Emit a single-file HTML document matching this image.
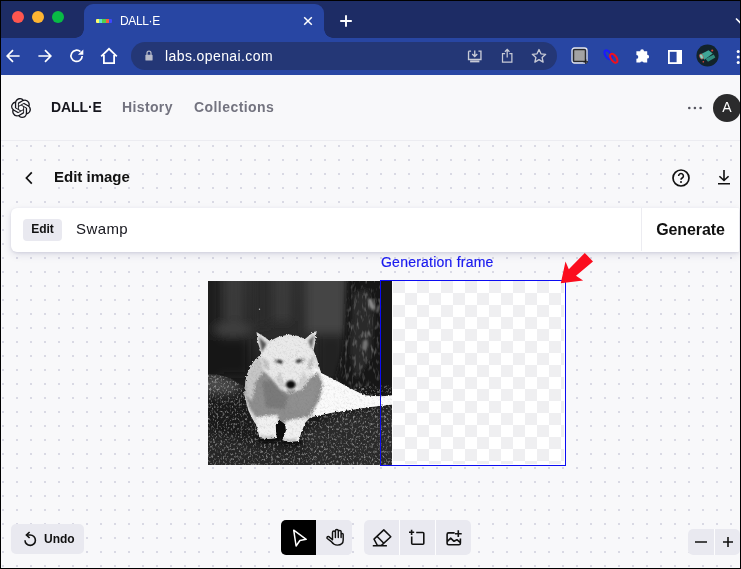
<!DOCTYPE html>
<html lang="en">
<head>
<meta charset="utf-8">
<title>DALL·E</title>
<style>
*{box-sizing:border-box;margin:0;padding:0}
html,body{width:741px;height:569px;overflow:hidden;background:#000}
body{font-family:"Liberation Sans",Arial,sans-serif;position:relative;color:#111}
#win{position:absolute;left:1px;top:1px;width:739px;height:567px;overflow:hidden;background:#f8f8fa}
.abs{position:absolute}
.nav,#tabtitle,#url,.t{will-change:transform}
/* chrome */
#tabbar{position:absolute;left:0;top:0;width:100%;height:37px;background:#1d2c65}
#tab{position:absolute;left:83px;top:3px;width:240px;height:34px;background:#2846a3;border-radius:9px 9px 0 0}
#tab:before,#tab:after{content:"";position:absolute;bottom:0;width:9px;height:9px}
#tab:before{left:-9px;background:radial-gradient(circle at 0 0,rgba(0,0,0,0) 8.5px,#2846a3 9px)}
#tab:after{right:-9px;background:radial-gradient(circle at 100% 0,rgba(0,0,0,0) 8.5px,#2846a3 9px)}
#toolbar{position:absolute;left:0;top:37px;width:100%;height:37px;background:#2846a3}
#pill{position:absolute;left:130px;top:4px;width:426px;height:28px;border-radius:14px;background:#243776}
.tl{position:absolute;top:10px;width:12px;height:12px;border-radius:50%}
#tabtitle{position:absolute;left:36px;top:10px;font-size:12px;color:#fff;letter-spacing:-.35px}
#url{position:absolute;left:34px;top:6px;font-size:14px;color:#fff;letter-spacing:.4px}
/* page */
#page{position:absolute;left:0;top:74px;width:100%;height:493px;background-color:#f8f8fa}
#hdr{position:absolute;left:0;top:0;width:100%;height:66px;border-bottom:1px solid #ececf1;background:#f8f8fa}
#canvas{position:absolute;left:0;top:66px;width:100%;height:427px;background-color:#f8f8fa;
 background-image:radial-gradient(circle,#d9d9e4 0.8px,rgba(217,217,228,0) 1.3px);background-size:14px 14px;background-position:-5px -2px}
.nav{position:absolute;top:24px;font-size:14px;font-weight:bold;line-height:16px;white-space:nowrap}
.ibtn{position:absolute;background:#f8f8fa}
.tool{position:absolute;top:0;width:35px;height:35px;background:#e9e9f0}
</style>
</head>
<body>
<div id="win">
 <div id="tabbar">
  <div class="tl" style="left:11px;background:#ff564f"></div>
  <div class="tl" style="left:31px;background:#ffb532"></div>
  <div class="tl" style="left:51px;background:#08bb45"></div>
  <div id="tab">
   <div class="abs" style="left:12px;top:15px;width:16px;height:4px;border-radius:1px;background:linear-gradient(90deg,#fdfd6a 0 20%,#5fe0d0 20% 40%,#52d14c 40% 60%,#f5603c 60% 80%,#3c46ff 80% 100%)"></div>
   <div id="tabtitle">DALL·E</div>
   <svg class="abs" style="left:218px;top:11px" width="12" height="12" viewBox="0 0 12 12"><path d="M2.2 2.2l7.6 7.6M9.8 2.2l-7.6 7.6" stroke="#fff" stroke-width="1.5" fill="none"/></svg>
  </div>
  <svg class="abs" style="left:338px;top:13px" width="14" height="14" viewBox="0 0 14 14"><path d="M7 1.2v11.6M1.2 7h11.6" stroke="#fff" stroke-width="1.9" fill="none"/></svg>
  <svg class="abs" style="left:733.500px;top:15.500px" width="10" height="8" viewBox="0 0 10 8"><path d="M1 1.5l4 4 4-4" stroke="#fff" stroke-width="1.6" fill="none"/></svg>
 </div>
 <div id="toolbar">
  <svg class="abs" style="left:4px;top:10px" width="16" height="16" viewBox="0 0 16 16"><path d="M14.6 8H2.6M8 2.2L2.2 8 8 13.8" stroke="#fff" stroke-width="1.7" fill="none"/></svg>
  <svg class="abs" style="left:36px;top:10px" width="16" height="16" viewBox="0 0 16 16"><path d="M1.4 8h12M8 2.2L13.8 8 8 13.8" stroke="#fff" stroke-width="1.7" fill="none"/></svg>
  <svg class="abs" style="left:68px;top:10px" width="16" height="16" viewBox="0 0 16 16"><path d="M13.2 8A5.6 5.6 0 1 1 11.4 3.7" stroke="#fff" stroke-width="1.7" fill="none"/><path d="M14.3 1.4v5.4H8.9z" fill="#fff"/></svg>
  <svg class="abs" style="left:99px;top:9px" width="18" height="18" viewBox="0 0 18 18"><path d="M1.2 9.3L9 1.8l7.8 7.5M3.9 8v8.1h10.2V8" stroke="#fff" stroke-width="1.8" fill="none" stroke-linejoin="miter"/></svg>
  <div id="pill">
   <svg class="abs" style="left:14px;top:8px" width="8" height="11" viewBox="0 0 10 13" preserveAspectRatio="none"><rect x="0.5" y="5.5" width="9" height="7" rx="1" fill="#b8bbc9"/><path d="M2.5 6V3.8a2.5 2.5 0 0 1 5 0V6" stroke="#b8bbc9" stroke-width="1.5" fill="none"/></svg>
   <div id="url">labs.openai.com</div>
   <svg class="abs" style="left:336px;top:7px" width="15.500" height="15.500" viewBox="0 0 16 16"><path d="M1.6 2.2h2.6M11.8 2.2h2.6v8.6H1.6V2.2M8 1.5v6M5.4 5.2L8 7.8l2.6-2.6" stroke="#c7cad6" stroke-width="1.4" fill="none"/><rect x="3.2" y="11.8" width="9.6" height="2" fill="#c7cad6"/></svg>
   <svg class="abs" style="left:370px;top:6px" width="12.400" height="15.500" viewBox="0 0 14 17"><path d="M4.6 6.2H1.7v9.6h10.6V6.2H9.4M7 10.5V1.6M4.4 4L7 1.4 9.6 4" stroke="#c7cad6" stroke-width="1.4" fill="none"/></svg>
   <svg class="abs" style="left:400px;top:6px" width="16" height="16" viewBox="0 0 17 17"><path d="M8.5 1.6l2.1 4.6 5 .5-3.8 3.4 1.1 4.9-4.4-2.6-4.4 2.6 1.1-4.9L1.4 6.7l5-.5z" stroke="#c7cad6" stroke-width="1.4" fill="none" stroke-linejoin="round"/></svg>
  </div>
  <!-- extension icons -->
  <svg class="abs" style="left:570px;top:9.400px" width="18" height="18" viewBox="0 0 18 18"><rect x="1" y="1" width="15" height="15" rx="2.5" fill="none" stroke="#e6e6e6" stroke-width="1.3"/><rect x="2.6" y="2.600" width="11.8" height="11.8" rx="1" fill="#a3a3a3" stroke="#2a2a2a" stroke-width="1.3"/><path d="M14.8 12.5v4.500M12.500 14.800h4.500" stroke="#1b1b1b" stroke-width="1.2"/></svg>
  <svg class="abs" style="left:601px;top:10px" width="18" height="18" viewBox="0 0 18 18"><ellipse cx="6.100" cy="6.800" rx="2.700" ry="5.100" transform="rotate(-35 6.100 6.800)" fill="none" stroke="#1a1aff" stroke-width="2.1"/><ellipse cx="11.800" cy="10.200" rx="2.700" ry="5.100" transform="rotate(-35 11.800 10.200)" fill="none" stroke="#f0101c" stroke-width="2.1"/></svg>
  <svg class="abs" style="left:633px;top:10px" width="17" height="17" viewBox="0 0 17 17"><path d="M6.2 3.2a1.9 1.9 0 0 1 3.8 0h3.2v3.6a1.9 1.9 0 0 1 0 3.8v4H9.6a1.8 1.8 0 0 0-3.4 0H2.4v-3.8a1.9 1.9 0 0 0 0-3.8V3.2z" fill="#fff"/></svg>
  <svg class="abs" style="left:666px;top:11px" width="16" height="16" viewBox="0 0 16 16"><rect x="1.9" y="1.9" width="12.2" height="12.2" fill="none" stroke="#fff" stroke-width="1.8"/><rect x="9.6" y="1.900" width="4.5" height="12.2" fill="#fff"/></svg>
  <svg class="abs" style="left:695px;top:6px" width="23" height="23" viewBox="0 0 22 22"><circle cx="11" cy="11" r="10.6" fill="#12232a"/><path d="M4 10l8-4 4 3-8 6z" fill="#3fa596"/><path d="M9 14l8-4 1.5 3-7 4z" fill="#2f8a7d"/><ellipse cx="5.2" cy="12" rx="1.6" ry="2.6" transform="rotate(-25 5.2 12)" fill="#7fd6c4" stroke="#c8463c" stroke-width=".6"/><circle cx="15.5" cy="6.2" r="1" fill="#d8463c"/><circle cx="7" cy="17" r=".8" fill="#d8463c"/></svg>
  <svg class="abs" style="left:735px;top:11px" width="4" height="16" viewBox="0 0 4 16"><circle cx="2.2" cy="2.5" r="1.5" fill="#fff"/><circle cx="2.2" cy="8" r="1.5" fill="#fff"/><circle cx="2.2" cy="13.5" r="1.5" fill="#fff"/></svg>
 </div>

 <div id="page">
  <div id="hdr">
   <svg class="abs" style="left:10px;top:23px" width="20" height="20" viewBox="0 0 24 24"><path fill="#16161d" d="M22.2819 9.8211a5.9847 5.9847 0 0 0-.5157-4.9108 6.0462 6.0462 0 0 0-6.5098-2.9A6.0651 6.0651 0 0 0 4.9807 4.1818a5.9847 5.9847 0 0 0-3.9977 2.9 6.0462 6.0462 0 0 0 .7427 7.0966 5.98 5.98 0 0 0 .511 4.9107 6.051 6.051 0 0 0 6.5146 2.9001A5.9847 5.9847 0 0 0 13.2599 24a6.0557 6.0557 0 0 0 5.7718-4.2058 5.9894 5.9894 0 0 0 3.9977-2.9001 6.0557 6.0557 0 0 0-.7475-7.0729zm-9.022 12.6081a4.4755 4.4755 0 0 1-2.8764-1.0408l.1419-.0804 4.7783-2.7582a.7948.7948 0 0 0 .3927-.6813v-6.7369l2.02 1.1686a.071.071 0 0 1 .038.052v5.5826a4.504 4.504 0 0 1-4.4945 4.4944zm-9.6607-4.1254a4.4708 4.4708 0 0 1-.5346-3.0137l.142.0852 4.783 2.7582a.7712.7712 0 0 0 .7806 0l5.8428-3.3685v2.3324a.0804.0804 0 0 1-.0332.0615L9.74 19.9502a4.4992 4.4992 0 0 1-6.1408-1.6464zM2.3408 7.8956a4.485 4.485 0 0 1 2.3655-1.9728V11.6a.7664.7664 0 0 0 .3879.6765l5.8144 3.3543-2.0201 1.1685a.0757.0757 0 0 1-.071 0l-4.8303-2.7865A4.504 4.504 0 0 1 2.3408 7.872zm16.5963 3.8558L13.1038 8.364 15.1192 7.2a.0757.0757 0 0 1 .071 0l4.8303 2.7913a4.4944 4.4944 0 0 1-.6765 8.1042v-5.6772a.79.79 0 0 0-.407-.667zm2.0107-3.0231l-.142-.0852-4.7735-2.7818a.7759.7759 0 0 0-.7854 0L9.409 9.2297V6.8974a.0662.0662 0 0 1 .0284-.0615l4.8303-2.7866a4.4992 4.4992 0 0 1 6.6802 4.66zM8.3065 12.863l-2.02-1.1638a.0804.0804 0 0 1-.038-.0567V6.0742a4.4992 4.4992 0 0 1 7.3757-3.4537l-.142.0805L8.704 5.459a.7948.7948 0 0 0-.3927.6813zm1.0976-2.3654l2.602-1.4998 2.6069 1.4998v2.9994l-2.5974 1.4997-2.6067-1.4997Z"/></svg>
   <div class="nav" style="left:50px;color:#16161d;letter-spacing:-.1px">DALL·E</div>
   <div class="nav" style="left:121px;color:#73737f;letter-spacing:.37px">History</div>
   <div class="nav" style="left:192.600px;color:#73737f;letter-spacing:.44px">Collections</div>
   <svg class="abs" style="left:686px;top:31px" width="16" height="4" viewBox="0 0 16 4"><circle cx="2.3" cy="2" r="1.3" fill="#55555f"/><circle cx="7.9" cy="2" r="1.3" fill="#55555f"/><circle cx="13.6" cy="2" r="1.3" fill="#55555f"/></svg>
   <div class="abs t" style="left:712px;top:19px;width:28px;height:28px;border-radius:50%;background:#2b2b2c;color:#fff;font-size:14px;line-height:26px;text-align:center">A</div>
  </div>
  <div id="canvas">
   <!-- sub header -->
   <div class="ibtn" style="left:12px;top:22px;width:34px;height:31px"><svg class="abs" style="left:10.700px;top:8px" width="10" height="14" viewBox="0 0 10 14"><path d="M7.8 1.4L2.4 7l5.4 5.6" stroke="#111" stroke-width="1.7" fill="none"/></svg></div>
   <div class="abs t" style="left:53.400px;top:26px;font-size:15px;font-weight:bold;line-height:20px;color:#111;white-space:nowrap">Edit image</div>
   <div class="ibtn" style="left:665px;top:23px;width:29px;height:29px"><svg class="abs" style="left:5px;top:4px" width="20" height="20" viewBox="0 0 20 20"><circle cx="10" cy="10" r="8" fill="none" stroke="#111" stroke-width="1.7"/><path d="M7.6 7.9a2.4 2.4 0 1 1 3.6 2.1c-.8.5-1.2.9-1.2 1.8" stroke="#111" stroke-width="1.6" fill="none"/><circle cx="10" cy="14" r="1" fill="#111"/></svg></div>
   <div class="ibtn" style="left:707px;top:23px;width:29px;height:29px"><svg class="abs" style="left:9px;top:5.300px" width="14" height="17" viewBox="0 0 14 18" preserveAspectRatio="none"><path d="M7 1v11M2.4 7.6L7 12.2l4.6-4.6M1 15.6h12" stroke="#111" stroke-width="1.6" fill="none"/></svg></div>
   <!-- prompt bar -->
   <div class="abs" style="left:10px;top:67px;width:727.700px;height:43.500px;background:#fff;border-radius:6px 1px 1px 6px;box-shadow:0 1px 3px rgba(30,30,90,.10),0 3px 8px rgba(30,30,90,.11)">
    <div class="abs t" style="left:12px;top:11px;width:39px;height:22px;border-radius:4px;background:#e9e9f0;font-size:12px;font-weight:bold;line-height:21px;text-align:center;color:#111">Edit</div>
    <div class="abs t" style="left:65px;top:11px;font-size:15px;line-height:20px;letter-spacing:.4px;color:#16161d">Swamp</div>
    <div class="abs" style="left:630px;top:0;width:1px;height:43px;background:#ececf1"></div>
    <div class="abs t" style="left:631px;top:0;width:97px;height:43px;font-size:16px;font-weight:bold;line-height:43px;letter-spacing:-.1px;text-align:center;color:#111">Generate</div>
   </div>
   <!-- image -->
   <div class="abs" id="wolf" style="left:207px;top:140px;width:184px;height:184px;background:#222;overflow:hidden">
<svg width="184" height="184" viewBox="0 0 184 184" style="display:block">
<defs>
<linearGradient id="bg" x1="0" y1="0" x2="0" y2="1"><stop offset="0" stop-color="#303030"/><stop offset=".3" stop-color="#2a2a2a"/><stop offset=".52" stop-color="#1d1d1d"/><stop offset="1" stop-color="#171717"/></linearGradient>
<filter id="b2" x="-20%" y="-20%" width="140%" height="140%"><feGaussianBlur stdDeviation="2"/></filter>
<filter id="b5" x="-30%" y="-30%" width="160%" height="160%"><feGaussianBlur stdDeviation="5"/></filter>
<filter id="b14" x="-20%" y="-20%" width="140%" height="140%"><feGaussianBlur stdDeviation="1.3"/></filter>
<filter id="b1" x="-20%" y="-20%" width="140%" height="140%"><feGaussianBlur stdDeviation=".8"/></filter>
<filter id="grain" x="0" y="0" width="100%" height="100%"><feTurbulence type="fractalNoise" baseFrequency=".55 .4" numOctaves="2" seed="11" result="n"/><feColorMatrix in="n" type="matrix" values="0 0 0 0 .85  0 0 0 0 .85  0 0 0 0 .85  3.2 0 0 0 -1.62"/><feComposite in2="SourceGraphic" operator="in"/></filter>
<filter id="bark" x="0" y="0" width="100%" height="100%"><feTurbulence type="fractalNoise" baseFrequency=".35 .12" numOctaves="2" seed="5" result="n"/><feColorMatrix in="n" type="matrix" values="0 0 0 0 .6  0 0 0 0 .6  0 0 0 0 .6  3 0 0 0 -1.55"/><feComposite in2="SourceGraphic" operator="in"/></filter>
<filter id="fur" x="-5%" y="-5%" width="110%" height="110%"><feTurbulence type="fractalNoise" baseFrequency=".45" numOctaves="2" seed="3" result="n"/><feDisplacementMap in="SourceGraphic" in2="n" scale="3.2"/><feGaussianBlur stdDeviation=".45"/></filter>
<filter id="furtex" x="0" y="0" width="100%" height="100%"><feTurbulence type="fractalNoise" baseFrequency=".5" numOctaves="2" seed="9" result="n"/><feColorMatrix in="n" type="matrix" values="0 0 0 0 .1  0 0 0 0 .1  0 0 0 0 .1  2.400 0 0 0 -1.100"/><feComposite in2="SourceGraphic" operator="in"/></filter>
<clipPath id="gclip"><path d="M0 93 L12 94 L24 98 L40 108 L40 140 L110 140 L135 112 L150 106 L184 104 V184 H0z"/></clipPath>
<clipPath id="wclip"><path d="M48.500 51L55 55 62 60 70 56 81 53.400 90 55 97 58 103 53 108.700 49.200 107.500 60 105.500 69.500 109 78 111.600 87 113 92 127 99 140.500 106.500 156.700 114.600 173 115.500 184 114.500 184 123.500 161.600 126 145.400 128.400 124.400 131.600 108 135 101.700 137 97 142 93 152 90.600 160 80 161 74.500 159 78 150 77.500 143.500 72.500 139.500 67.500 143.500 68.500 157 60 158 51.700 157 50 150 48.500 145 44 137 40.400 129.400 36.200 113.200 37.500 100 38.800 93.800 42 87 45.300 81 50 76 53.400 72.800 50 62z"/></clipPath>
</defs>
<rect width="184" height="184" fill="url(#bg)"/>
<g filter="url(#b5)">
<rect x="-10" y="-10" width="22" height="110" fill="#1f1f1f"/>
<rect x="18" y="-10" width="16" height="50" fill="#3a3a3a"/>
<ellipse cx="25" cy="48" rx="19" ry="6" fill="#424242"/>
<rect x="48" y="-10" width="12" height="55" fill="#2a2a2a"/>
<rect x="66" y="-10" width="16" height="50" fill="#3b3b3b"/>
<rect x="98" y="-10" width="40" height="62" fill="#444"/>
<rect x="-10" y="58" width="50" height="36" fill="#191919"/>
<rect x="110" y="55" width="26" height="45" fill="#222"/>
</g>
<g filter="url(#b2)">
<path d="M139 -5L137 40 135 70 127 100 122 112 190 112 190 -5z" fill="#191919"/>
<path d="M146 12l14-4 6 30-4 40-14 20-6-30z" fill="#2b2b2b"/>
<rect x="173" y="-5" width="16" height="120" fill="#131313"/>
</g>
<path d="M139 0L137 40 135 70 127 100 122 112 173 112 173 0z" fill="#fff" filter="url(#bark)" opacity=".36"/>
<g filter="url(#b1)"><path d="M160 17l4 2 3 7-2 4-4-5z" fill="#8a8a8a"/><path d="M170 24l2 1-2 7-2-1z" fill="#777"/><path d="M155 60l4-2 1 6-3 6-3-2z" fill="#757575"/><path d="M158 51l3 1-1 3z" fill="#888"/></g>
<!-- ground -->
<g clip-path="url(#gclip)">
<rect y="90" width="184" height="94" fill="#191919"/>
<g filter="url(#b5)">
<path d="M-5 92L14 94 36 106 22 114-5 112z" fill="#4a4a4a"/>
<path d="M96 150L130 134 190 126 190 190 96 190z" fill="#2c2c2c"/>
<path d="M-5 150L60 165 100 170 100 190-5 190z" fill="#262626"/>
<path d="M120 104L184 100 184 112 130 116z" fill="#161616"/>
</g>
<rect y="90" width="184" height="94" fill="#fff" filter="url(#grain)" opacity=".5"/>
</g>
<!-- wolf -->
<g filter="url(#b1)"><ellipse cx="60" cy="159" rx="11" ry="2.500" fill="#0a0a0a"/><ellipse cx="82" cy="161.500" rx="11" ry="2.500" fill="#0a0a0a"/><path d="M65 142l7-4 7 4 1 15-14 3z" fill="#0d0d0d"/></g>
<g filter="url(#fur)">
<path d="M48.500 51L55 55 62 60 70 56 81 53.400 90 55 97 58 103 53 108.700 49.200 107.500 60 105.500 69.500 109 78 111.600 87 113 92 127 99 140.500 106.500 156.700 114.600 173 115.500 184 114.500 184 123.500 161.600 126 145.400 128.400 124.400 131.600 108 135 101.700 137 97 142 93 152 90.600 160 80 161 74.500 159 78 150 77.500 143.500 72.500 139.500 67.500 143.500 68.500 157 60 158 51.700 157 50 150 48.500 145 44 137 40.400 129.400 36.200 113.200 37.500 100 38.800 93.800 42 87 45.300 81 50 76 53.400 72.800 50 62z" fill="#dedede"/>
<g clip-path="url(#wclip)">
<g filter="url(#b14)">
<path d="M106 86L127 97 141 105 157 113 190 113 190 126 145 130 108 137 99 122z" fill="#fbfbfb"/>
<path d="M38 95L46 86 56 90 64 98 72 108 82 113 94 108 102 97 110 91 115 103 112 118 104 132 97 140 76 143 66 138 50 139 42 128 36 112z" fill="#8e8e8e"/>
<path d="M54 100L64 100 72 110 80 116 76 128 58 126z" fill="#7a7a7a"/>
<path d="M80 116L96 110 104 100 108 112 100 128 84 130z" fill="#909090"/>
<path d="M38 95L45 82 52 74 56 90 48 100 44 120 38 115z" fill="#c6c6c6"/>
<path d="M52 73L62 60 81 54 97 57 105 71 108 86 101 97 92 108 83 112 74 108 65 98 55 88z" fill="#eaeaea"/>
<path d="M66 77.500l9 2.500-1.500 3.500-7.500-1.500zM97 76.500l-9 2.500 1.500 3.500 7.500-1.500z" fill="#b0b0b0"/><path d="M54 76l6 4 2 10-6-3zM106 74l-5 5-2 10 6-3z" fill="#c2c2c2"/>
<path d="M72 90l4 12 6 4-8 1-7-9zM95 90l-4 12-6 4 8 1 7-9z" fill="#cfcfcf"/>
<path d="M49 136L70 134 70 158 50 158z" fill="#f1f1f1"/>
<path d="M78 140L99 136 93 160 72 160z" fill="#f1f1f1"/>
</g>
<rect width="184" height="184" fill="#000" filter="url(#furtex)" opacity=".16"/>
</g>
</g>
<g filter="url(#b1)">
<path d="M51 56l7.500 7-4.500 8z" fill="#555"/><path d="M106.300 54l-6 6 3.300 8z" fill="#686868"/>
<ellipse cx="71.800" cy="80.600" rx="3" ry="1.400" fill="#1c1c1c" transform="rotate(14 71.800 80.600)"/>
<ellipse cx="90.600" cy="80" rx="3" ry="1.400" fill="#1c1c1c" transform="rotate(-14 90.600 80)"/>
<ellipse cx="82.800" cy="103.600" rx="4.800" ry="4.100" fill="#0c0c0c"/>
<path d="M79 109.500q4 2.500 8 0" stroke="#4a4a4a" stroke-width="1.300" fill="none"/>
<path d="M53 157l1.500-3M57 158l1-3M61 158l0-3M65 157.500l-1-3M75 160l1.500-3M79 161l1-3M83 161l0-3M87 160.500l-1-3" stroke="#333" stroke-width=".8"/>
</g>
<circle cx="51.500" cy="28.200" r=".7" fill="#bbb"/>
</svg>
</div>
   <!-- generation frame -->
   <div class="abs t" style="left:380px;top:113px;font-size:14px;line-height:16px;letter-spacing:.23px;color:#1a1aee;-webkit-text-stroke:.2px #1a1aee;white-space:nowrap">Generation frame</div>
   <div class="abs" style="left:391px;top:140px;width:174px;height:184px;background:#fff"></div>
   <div class="abs" id="checker" style="left:392px;top:140px;width:171px;height:183px;background:conic-gradient(#fff 25%,#efeff1 0 50%,#fff 0 75%,#efeff1 0);background-size:24px 24px"></div>
   <div class="abs" style="left:379px;top:139px;width:186px;height:186px;border:1px solid #0c0cf2"></div>
   <svg class="abs" style="left:555px;top:105px" width="45" height="45" viewBox="555 246 45 45"><polygon points="560.7,283.5 565.4,261.7 568.7,269.4 584.7,253.1 592.9,261.7 575.9,275.9 583,280.6" fill="#fb0d1e" transform="translate(-.9 -.2)"/></svg>
   <!-- bottom tools -->
   <div class="abs" style="left:10px;top:383px;width:73px;height:30px;border-radius:5px;background:#e9e9f0">
    <svg class="abs" style="left:11px;top:7px" width="16" height="16" viewBox="0 0 16 16"><path d="M3 9.2a5.2 5.2 0 1 0 5.2-5.2H5" stroke="#111" stroke-width="1.6" fill="none"/><path d="M7.6 1L4.4 4l3.2 3" stroke="#111" stroke-width="1.6" fill="none"/></svg>
    <div class="abs t" style="left:33px;top:7px;font-size:12px;font-weight:bold;line-height:16px;color:#111">Undo</div>
   </div>
   <div class="abs" style="left:280px;top:379px;width:71px;height:35px;border-radius:5px;overflow:hidden;background:#e9e9f0">
    <div class="tool" style="left:0;background:#000"><svg class="abs" style="left:0;top:0" width="35" height="35" viewBox="0 0 35 35"><path d="M12.7 10.200L25.200 19.300 18.900 20.500 15.100 26z" stroke="#fff" stroke-width="1.500" fill="none" stroke-linejoin="round"/></svg></div>
    <div class="tool" style="left:35px;width:36px"><svg class="abs" style="left:0;top:0" width="36" height="35" viewBox="0 0 36 35"><path d="M16.500 19.800V12.400a1.450 1.450 0 0 1 2.900 0V17.500M19.400 12.400V10.900a1.450 1.450 0 0 1 2.900 0V17.500M22.300 11.800a1.400 1.400 0 0 1 2.800 0V17.500M25.100 14.500a1.050 1.050 0 0 1 2.100 0V20c0 3.200-2.500 5.100-5.900 5.100-2.900 0-4.500-1.300-5.900-3.400L11.200 18.500a1.300 1.300 0 0 1 2.200-1.400L16.500 19.800" stroke="#111" stroke-width="1.450" fill="none" stroke-linecap="round" stroke-linejoin="round"/></svg></div>
   </div>
   <div class="abs" style="left:363px;top:379px;width:107px;height:35px;border-radius:5px;overflow:hidden;background:#fdfdfe">
    <div class="tool" style="left:0"><svg class="abs" style="left:0;top:0" width="35" height="35" viewBox="0 0 35 35"><path d="M19.800 9.900L26.800 16.800 17.200 25.600 13.500 25.600 10 19.100z M12.900 16.200L19.800 23.200M8.800 25.700H22.900" stroke="#111" stroke-width="1.500" fill="none" stroke-linejoin="round"/></svg></div>
    <div class="tool" style="left:36px"><svg class="abs" style="left:0;top:0" width="35" height="35" viewBox="0 0 35 35"><path d="M16.200 12.500H22.800a1 1 0 0 1 1 1V23.200a1 1 0 0 1-1 1H12.700a1 1 0 0 1-1-1V16.600M11.600 9.700v5.200M9 12.300h5.200" stroke="#111" stroke-width="1.600" fill="none"/></svg></div>
    <div class="tool" style="left:72px"><svg class="abs" style="left:0;top:0" width="35" height="35" viewBox="0 0 35 35"><path d="M18.600 12.900H12.600a1.500 1.500 0 0 0-1.500 1.500V23.300a1.500 1.500 0 0 0 1.500 1.500H22.900a1.500 1.500 0 0 0 1.500-1.500V18.600M11.100 21.600L14.700 18.200 18 21.300 20.900 19.700 24.400 22.600M22.300 10.300v6.800M18.900 13.700h6.800" stroke="#111" stroke-width="1.600" fill="none" stroke-linejoin="round"/></svg></div>
   </div>
   <div class="abs" style="left:687px;top:388px;width:51.500px;height:26px;border-radius:5px;overflow:hidden;background:#fdfdfe">
    <div class="tool" style="left:0;width:26px;height:26px"><svg class="abs" style="left:6px;top:6px" width="14" height="14" viewBox="0 0 14 14"><path d="M1 7h12" stroke="#111" stroke-width="1.6"/></svg></div>
    <div class="tool" style="left:27px;width:26px;height:26px"><svg class="abs" style="left:7px;top:7px" width="12" height="12" viewBox="0 0 12 12"><path d="M1 6h10M6 1v10" stroke="#111" stroke-width="1.600"/></svg></div>
   </div>
  </div>
 </div>
</div>
<div style="position:absolute;left:740px;top:0;width:1px;height:569px;background:#000"></div>
<div style="position:absolute;left:0;top:567.5px;width:741px;height:2px;background:#000"></div>
</body>
</html>
